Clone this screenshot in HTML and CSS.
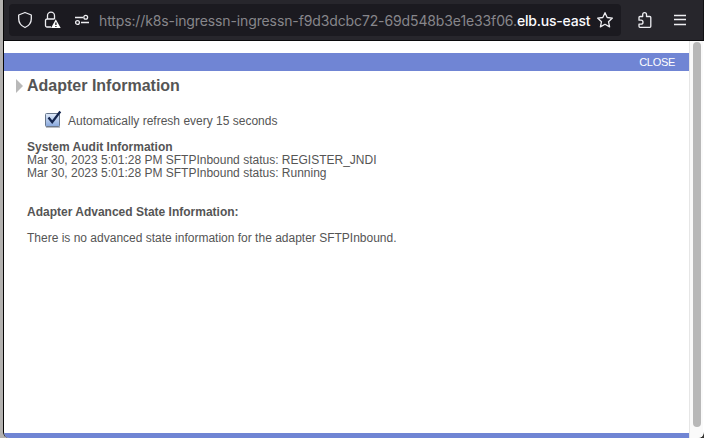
FILE: index.html
```
<!DOCTYPE html>
<html lang="en">
<head>
<meta charset="utf-8">
<title>Adapter Information</title>
<link rel="stylesheet" href="styles.css">
</head>
<body>
<div class="window">
  <header class="toolbar">
    <div class="address">
      <svg class="shield" width="16" height="18" viewBox="0 0 16 18"><path d="M8 1.500 14.300 4v3.800c0 4-2.300 7-6.300 8.700-4-1.700-6.300-4.700-6.300-8.700V4Z"/></svg>
      <svg class="lock" width="18" height="18" viewBox="0 0 18 18"><path d="M4.500 8V4.700a3.500 3.500 0 0 1 7 0V8M8 16H4a1.500 1.500 0 0 1-1.500-1.500V9.500A1.500 1.500 0 0 1 4 8h7.500"/><path class="warning" d="M12.800 8.300 17.700 17H8Z"/><path class="mark" d="M12.900 11.500v2.500M12.900 15v1"/></svg>
      <svg class="tune" width="16" height="12" viewBox="0 0 16 12"><path d="M1 3.500h8M7 8.500h8"/><circle cx="11.700" cy="3.300" r="1.900"/><circle cx="3.500" cy="8.500" r="1.900"/></svg>
      <span class="url">https://k8s-ingressn-ingressn-f9d3dcbc72-69d548b3e1e33f06.<b>elb.us-east</b></span>
      <svg class="star" width="18" height="18" viewBox="0 0 18 18"><path d="m9 1.700 2.200 4.800 5.200.6-3.900 3.600 1.100 5.200L9 13.300l-4.600 2.600 1.100-5.200-3.900-3.600 5.200-.6Z"/></svg>
    </div>
    <svg class="puzzle" width="16" height="18" viewBox="0 0 16 18"><path d="M2 8V6.500a1 1 0 0 1 1-1h2.700V3.600a1.900 1.900 0 0 1 3.800 0v1.900h3.300a1 1 0 0 1 1 1v8.800a1 1 0 0 1-1 1H3a1 1 0 0 1-1-1v-2.100h2a2 2 0 0 0 0-4H2Z"/></svg>
    <svg class="menu" width="12" height="12" viewBox="0 0 12 12"><path d="M0 1.500h12M0 5.500h12M0 10.500h12"/></svg>
  </header>
  <div class="viewport">
    <main class="page">
      <div class="bar"><a class="close">CLOSE</a></div>
      <div class="heading">
        <svg width="7" height="14" viewBox="0 0 7 14"><path d="M0 0 7 7 0 14Z"/></svg>
        <h1>Adapter Information</h1>
      </div>
      <label class="refresh">
        <svg width="17" height="18" viewBox="0 0 17 18">
          <defs><linearGradient id="box" x2="0" y2="1"><stop stop-color="#e2ecfa"/><stop offset="1" stop-color="#87a7dc"/></linearGradient></defs>
          <rect x=".5" y="3.500" width="14" height="13" rx="1" fill="url(#box)" stroke="#67768c"/>
          <path d="M1 17h14" stroke="#777d88"/>
          <path d="m3.500 7.500 3.700 4.700L15.300 1.500" fill="none" stroke="#14254e" stroke-width="2.300"/>
        </svg>
        <span>Automatically refresh every 15 seconds</span>
      </label>
      <section class="audit">
        <h2>System Audit Information</h2>
        <p>Mar 30, 2023 5:01:28 PM SFTPInbound status: REGISTER_JNDI</p>
        <p>Mar 30, 2023 5:01:28 PM SFTPInbound status: Running</p>
      </section>
      <section class="advanced">
        <h2>Adapter Advanced State Information:</h2>
        <p>There is no advanced state information for the adapter SFTPInbound.</p>
      </section>
      <div class="footer-bar"></div>
    </main>
    <div class="scrollbar"><div class="thumb"></div></div>
  </div>
</div>
</body>
</html>
```
FILE: styles.css
```
* { box-sizing: border-box; }
html { background: #33322f; }
body {
  margin: 0;
  height: 438px;
  overflow: hidden;
  padding-left: 3px;
  background: linear-gradient(90deg, #b3b1af 50%, #33322f 50%);
  font: 12px/13px "Liberation Sans", Arial, sans-serif;
  color: #555;
}
svg { display: block; flex: none; }
h1, h2, p { margin: 0; white-space: nowrap; }
.window {
  height: 438px;
  display: flex;
  flex-direction: column;
  border-left: 1px solid #050505;
  border-bottom-left-radius: 6px;
  border-bottom-right-radius: 6px;
  overflow: hidden;
  background: #fff;
}
.toolbar {
  height: 41px;
  flex: none;
  display: flex;
  align-items: center;
  background: #27262c;
  border-bottom: 1px solid #09090b;
  border-right: 1px solid #111114;
  padding-left: 5px;
}
.toolbar svg { fill: none; stroke: #eeeef2; stroke-width: 1.3; stroke-linejoin: round; }
.address {
  width: 612px;
  height: 32px;
  display: flex;
  align-items: center;
  background: #1b1a20;
  border-radius: 4px;
  padding-left: 8px;
}
.lock { margin-left: 10px; }
.toolbar .warning { fill: #fff; stroke: none; }
.toolbar .mark { stroke: #1b1a20; }
.tune { margin-left: 13px; }
.url {
  width: 497px;
  margin-left: 9px;
  padding-top: 1px;
  font: 14px/20px Inter, sans-serif;
  letter-spacing: -0.12px;
  color: #87868b;
  white-space: nowrap;
}
.url b { font-weight: 500; letter-spacing: -0.2px; color: #fbfbfe; }
.puzzle { margin-left: 16px; }
.menu { margin-left: 21px; }
.viewport { flex: 1; display: flex; min-height: 0; }
.page {
  width: 685px;
  display: flex;
  flex-direction: column;
  padding-top: 12px;
}
.bar {
  height: 18px;
  flex: none;
  display: flex;
  justify-content: flex-end;
  background: #7085d4;
  padding-right: 14px;
}
.close { color: #fff; font-size: 11px; line-height: 18px; letter-spacing: -0.3px; }
.heading { height: 29px; flex: none; display: flex; align-items: center; padding-left: 12px; }
.heading svg { fill: #b9b9b9; }
.heading h1 { margin-left: 4px; font-size: 16px; line-height: 20px; }
.refresh { height: 41px; flex: none; display: flex; padding: 10px 0 0 41px; }
.refresh span { margin: 5px 0 0 6px; }
.audit { height: 65px; flex: none; padding-left: 23px; }
.advanced { padding-left: 23px; }
h2 { font-size: 12px; line-height: 13px; }
.advanced p { margin-top: 13px; }
.footer-bar { height: 5px; margin-top: auto; background: #7085d4; }
.scrollbar {
  width: 14px;
  padding: 1px 0 0 3px;
  background: #fafafa;
  border-left: 1px solid #e6e6e6;
}
.thumb { width: 8px; height: 385px; border-radius: 4px; background: #b8b8b8; }
```
